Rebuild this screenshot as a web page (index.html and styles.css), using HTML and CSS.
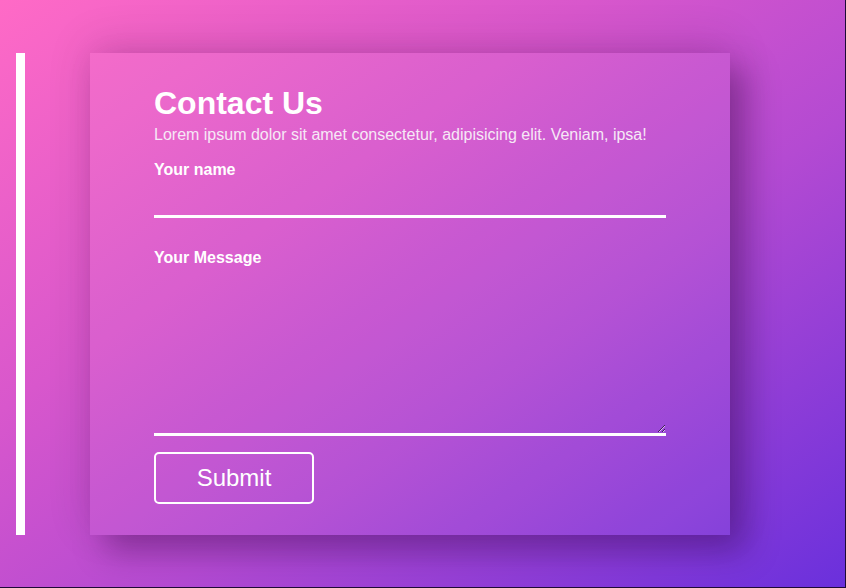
FILE: index.html
```html
<!DOCTYPE html>
<html lang="en">
<head>
<meta charset="utf-8">
<title>Contact Us</title>
<link rel="stylesheet" href="styles.css">
</head>
<body>
<div class="page">
  <div class="bar"></div>
  <form class="card">
    <h1 class="title">Contact Us</h1>
    <p class="intro">Lorem ipsum dolor sit amet consectetur, adipisicing elit. Veniam, ipsa!</p>
    <label class="label" for="name">Your name</label>
    <input class="field" id="name" type="text">
    <label class="label label-msg" for="msg">Your Message</label>
    <textarea class="area" id="msg"></textarea>
    <button class="submit" type="button">Submit</button>
  </form>
</div>
</body>
</html>
```

FILE: styles.css
```css
html {
  background: #1e0a36;
  margin: 0;
  padding: 0;
}

body {
  margin: 0;
  width: 845px;
  height: 587px;
  overflow: hidden;
  font-family: "Liberation Sans", Arial, sans-serif;
  color: #fff;
  background: linear-gradient(to bottom right, #ff6ac6 0%, #d857cc 35%, #b44ad2 60%, #6a30dc 100%);
}

.page {
  display: flex;
  align-items: flex-start;
  gap: 65px;
  padding: 53px 0 0 16px;
}

.bar {
  width: 9px;
  height: 482px;
  background: #fff;
  flex: none;
}

.card {
  width: 640px;
  height: 482px;
  box-sizing: border-box;
  padding: 32px 64px 0;
  background: rgba(255, 255, 255, 0.05);
  box-shadow: 0 -8px 40px rgba(60, 0, 60, 0.16), 16px 16px 30px rgba(40, 0, 60, 0.34);
  display: flex;
  flex-direction: column;
  align-items: flex-start;
}

.title {
  margin: 0 0 4px;
  font-size: 32px;
  line-height: 37px;
  font-weight: bold;
}

.intro {
  margin: 0 0 17px;
  font-size: 16px;
  line-height: 18px;
  color: #f6e8f6;
}

.label {
  display: block;
  font-size: 16px;
  line-height: 18px;
  font-weight: bold;
}

.label-msg {
  margin-top: 31px;
}

.field,
.area {
  display: block;
  width: 512px;
  box-sizing: border-box;
  border: none;
  border-bottom: 3px solid #fff;
  background: transparent;
  color: #fff;
  font: 16px "Liberation Sans", Arial, sans-serif;
  outline: none;
  padding: 0;
  margin: 0;
}

.field {
  height: 39px;
}

.area {
  height: 169px;
  resize: vertical;
}

.submit {
  margin-top: 16px;
  width: 160px;
  height: 52px;
  box-sizing: border-box;
  border: 2px solid #fff;
  border-radius: 5px;
  background: transparent;
  color: #fff;
  font: 24px "Liberation Sans", Arial, sans-serif;
  padding: 0;
}
```
